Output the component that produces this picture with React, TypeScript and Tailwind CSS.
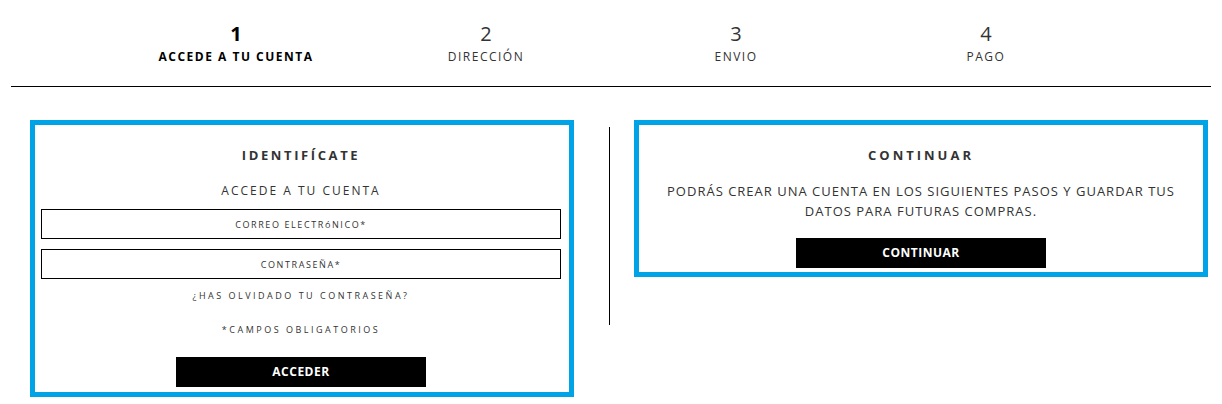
import React from 'react';

const steps = [
  { n: '1', label: 'ACCEDE A TU CUENTA', active: true },
  { n: '2', label: 'DIRECCIÓN', active: false },
  { n: '3', label: 'ENVIO', active: false },
  { n: '4', label: 'PAGO', active: false },
];

const CheckoutLogin: React.FC = () => {
  return (
    <div className="bg-white w-[1222px] h-[404px] text-[#222] overflow-hidden" style={{ fontFamily: '"Open Sans", "Liberation Sans", sans-serif' }}>
      {/* Steps */}
      <div className="flex justify-center pt-[22px]">
        {steps.map((s) => (
          <div key={s.n} className="w-[250px] flex flex-col items-center">
            <span className={`text-[20px] leading-[24px] ${s.active ? 'font-bold text-black' : 'text-[#333]'}`}>{s.n}</span>
            <span className={`mt-[3px] text-[12px] leading-[16px] ${s.active ? 'font-bold text-black tracking-[1.5px]' : 'text-[#333] tracking-[1.5px]'}`}>
              {s.label}
            </span>
          </div>
        ))}
      </div>
      <div className="mx-[11px] mt-[21px] h-px bg-black" />

      <div className="flex items-start mt-[33px] pl-[30px]">
        {/* Identify */}
        <div className="w-[544px] border-[5px] border-[#00a3e6] flex flex-col items-center pl-[6px] pr-[8px] pt-[20px] pb-[5px]">
          <h2 className="text-[13px] leading-[20px] font-bold tracking-[2.6px] text-[#333]">IDENTIFÍCATE</h2>
          <p className="mt-[16px] text-[12px] leading-[20px] tracking-[2px] text-[#333]">ACCEDE A TU CUENTA</p>
          <input
            type="email"
            placeholder="CORREO ELECTRóNICO*"
            className="mt-[8px] w-full h-[30px] border border-black text-center text-[9px] tracking-[1.6px] outline-none placeholder:text-[#333]"
          />
          <input
            type="password"
            placeholder="CONTRASEÑA*"
            className="mt-[10px] w-full h-[30px] border border-black text-center text-[9px] tracking-[1.6px] outline-none placeholder:text-[#333]"
          />
          <a className="mt-[7px] text-[9px] leading-[20px] tracking-[2.5px] text-[#333]">¿HAS OLVIDADO TU CONTRASEÑA?</a>
          <p className="mt-[14px] text-[9px] leading-[20px] tracking-[2.5px] text-[#333]">*CAMPOS OBLIGATORIOS</p>
          <button className="mt-[17px] w-[250px] h-[30px] bg-black text-white text-[12px] font-bold tracking-[0.5px]">ACCEDER</button>
        </div>

        <div className="ml-[35px] mt-[7px] w-px h-[198px] bg-black" />

        {/* Guest */}
        <div className="ml-[24px] w-[574px] border-[5px] border-[#00a3e6] flex flex-col items-center pt-[20px] pb-[4px]">
          <h2 className="text-[13px] leading-[20px] font-bold tracking-[3px] text-[#333]">CONTINUAR</h2>
          <p className="mt-[16px] text-[13px] leading-[20px] tracking-[1px] text-[#333] text-center">
            PODRÁS CREAR UNA CUENTA EN LOS SIGUIENTES PASOS Y GUARDAR TUS
            <br />
            DATOS PARA FUTURAS COMPRAS.
          </p>
          <button className="mt-[17px] w-[250px] h-[30px] bg-black text-white text-[12px] font-bold tracking-[0.5px]">CONTINUAR</button>
        </div>
      </div>
    </div>
  );
};

export default function App() {
  return <CheckoutLogin />;
}
